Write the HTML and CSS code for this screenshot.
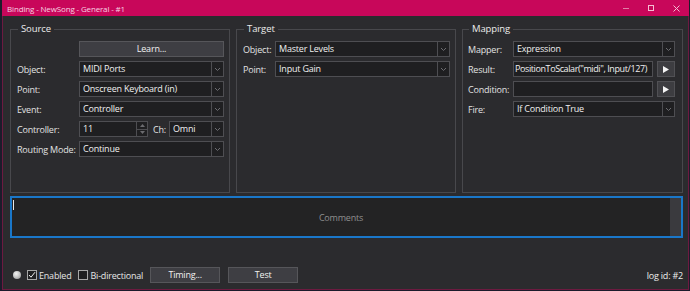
FILE: index.html
```html
<!DOCTYPE html>
<html lang="en">
<head>
    <meta charset="UTF-8">
    <meta name="viewport" content="width=device-width, initial-scale=1.0">
    <title>Binding - NewSong - General - #1</title>
    <link rel="stylesheet" href="styles.css">
</head>
<body>
    <div class="window">
        <div class="titlebar">
            <span class="title">Binding - NewSong - General - #1</span>
            <div class="caption">
                <svg class="cap-btn dim" width="6" height="6" viewBox="0 0 6 6"><path d="M0 3.5H6" stroke="currentColor" stroke-width="1"/></svg>
                <svg class="cap-btn" width="6" height="6" viewBox="0 0 6 6"><rect x="0.5" y="0.5" width="5" height="5" fill="none" stroke="currentColor" stroke-width="1"/></svg>
                <svg class="cap-btn" width="7" height="7" viewBox="0 0 7 7"><path d="M0.5 0.5L6.5 6.5M6.5 0.5L0.5 6.5" stroke="currentColor" stroke-width="1"/></svg>
            </div>
        </div>
        <div class="client">
            <div class="groups">
                <fieldset class="group source">
                    <legend>Source</legend>
                    <div class="form">
                        <span></span>
                        <div class="btn">Learn...</div>

                        <span class="lbl">Object:</span>
                        <div class="select"><span class="value">MIDI Ports</span><span class="arrow"><svg width="5" height="3" viewBox="0 0 5 3"><path d="M0 0L2.5 2.5L5 0" fill="none" stroke="currentColor"/></svg></span></div>

                        <span class="lbl">Point:</span>
                        <div class="select"><span class="value">Onscreen Keyboard (in)</span><span class="arrow"><svg width="5" height="3" viewBox="0 0 5 3"><path d="M0 0L2.5 2.5L5 0" fill="none" stroke="currentColor"/></svg></span></div>

                        <span class="lbl">Event:</span>
                        <div class="select"><span class="value">Controller</span><span class="arrow"><svg width="5" height="3" viewBox="0 0 5 3"><path d="M0 0L2.5 2.5L5 0" fill="none" stroke="currentColor"/></svg></span></div>

                        <span class="lbl">Controller:</span>
                        <div class="pair">
                            <div class="spin">
                                <span class="value">11</span>
                                <span class="spin-btns">
                                    <span class="spin-up"><svg width="5" height="3" viewBox="0 0 5 3"><path d="M0 3L2.5 0L5 3Z" fill="currentColor"/></svg></span>
                                    <span class="spin-down"><svg width="5" height="3" viewBox="0 0 5 3"><path d="M0 0L2.5 3L5 0Z" fill="currentColor"/></svg></span>
                                </span>
                            </div>
                            <span class="lbl ch">Ch:</span>
                            <div class="select grow"><span class="value">Omni</span><span class="arrow"><svg width="5" height="3" viewBox="0 0 5 3"><path d="M0 0L2.5 2.5L5 0" fill="none" stroke="currentColor"/></svg></span></div>
                        </div>

                        <span class="lbl">Routing Mode:</span>
                        <div class="select"><span class="value">Continue</span><span class="arrow"><svg width="5" height="3" viewBox="0 0 5 3"><path d="M0 0L2.5 2.5L5 0" fill="none" stroke="currentColor"/></svg></span></div>
                    </div>
                </fieldset>

                <fieldset class="group target">
                    <legend>Target</legend>
                    <div class="form">
                        <span class="lbl">Object:</span>
                        <div class="select"><span class="value">Master Levels</span><span class="arrow"><svg width="5" height="3" viewBox="0 0 5 3"><path d="M0 0L2.5 2.5L5 0" fill="none" stroke="currentColor"/></svg></span></div>

                        <span class="lbl">Point:</span>
                        <div class="select"><span class="value">Input Gain</span><span class="arrow"><svg width="5" height="3" viewBox="0 0 5 3"><path d="M0 0L2.5 2.5L5 0" fill="none" stroke="currentColor"/></svg></span></div>
                    </div>
                </fieldset>

                <fieldset class="group mapping">
                    <legend>Mapping</legend>
                    <div class="form">
                        <span class="lbl">Mapper:</span>
                        <div class="select"><span class="value">Expression</span><span class="arrow"><svg width="5" height="3" viewBox="0 0 5 3"><path d="M0 0L2.5 2.5L5 0" fill="none" stroke="currentColor"/></svg></span></div>

                        <span class="lbl">Result:</span>
                        <div class="pair">
                            <div class="input grow scrolled"><span>PositionToScalar("midi", Input/127)</span></div>
                            <div class="play"><svg width="6" height="7" viewBox="0 0 6 7"><path d="M0 0L6 3.5L0 7Z" fill="currentColor"/></svg></div>
                        </div>

                        <span class="lbl">Condition:</span>
                        <div class="pair">
                            <div class="input grow"></div>
                            <div class="play"><svg width="6" height="7" viewBox="0 0 6 7"><path d="M0 0L6 3.5L0 7Z" fill="currentColor"/></svg></div>
                        </div>

                        <span class="lbl">Fire:</span>
                        <div class="select"><span class="value">If Condition True</span><span class="arrow"><svg width="5" height="3" viewBox="0 0 5 3"><path d="M0 0L2.5 2.5L5 0" fill="none" stroke="currentColor"/></svg></span></div>
                    </div>
                </fieldset>
            </div>

            <div class="comments">
                <span class="caret"></span>
                <span class="placeholder">Comments</span>
                <span class="scrollbar"></span>
            </div>

            <div class="footer">
                <span class="led"></span>
                <span class="check on"><svg width="8" height="8" viewBox="0 0 8 8"><path d="M1 4L3 6.2L7 1.2" fill="none" stroke="currentColor" stroke-width="1"/></svg></span>
                <span class="check-lbl">Enabled</span>
                <span class="check"></span>
                <span class="check-lbl">Bi-directional</span>
                <div class="btn wide">Timing...</div>
                <div class="btn wide">Test</div>
                <span class="logid">log id: #2</span>
            </div>
        </div>
    </div>
</body>
</html>
```

FILE: styles.css
```css
body {
    margin: 0;
    width: 690px;
    height: 291px;
    overflow: hidden;
    background: #1c1b2b;
    font-family: "Open Sans", "Noto Sans", sans-serif;
    font-size: 9px;
    letter-spacing: -0.2px;
    color: #e6e6e6;
}
.window {
    margin-left: 2px;
    width: 685px;
    height: 289px;
    background: #2b2b2e;
    border: 1px solid #6d1a40;
    border-top: none;
    display: flex;
    flex-direction: column;
}
.titlebar {
    height: 16px;
    background: #c8075a;
    display: flex;
    align-items: center;
    margin-left: -1px;
    margin-right: -1px;
}
.title {
    padding-left: 5px;
    font-size: 8px;
    letter-spacing: -0.15px;
    color: #f6d2e0;
}
.caption {
    margin-left: auto;
    display: flex;
    align-items: center;
    gap: 19px;
    padding-right: 9px;
    color: #f3bcd2;
}
.cap-btn.dim {
    color: #e07fa6;
}
.client {
    flex: 1;
    display: flex;
    flex-direction: column;
    padding: 6px 5px 0 7px;
}
.groups {
    display: flex;
    gap: 6px;
    height: 171px;
}
.group {
    flex: 1;
    margin: 0;
    min-width: 0;
    border: 1px solid #48484c;
    padding: 5px 5px 0 6px;
}
.group legend {
    font-size: 9.5px;
    letter-spacing: -0.1px;
    line-height: 14px;
    padding: 0 3px;
    margin-left: 1px;
    color: #ececec;
}
.form {
    display: grid;
    row-gap: 4px;
    grid-auto-rows: 16px;
    align-items: center;
}
.source .form {
    grid-template-columns: 62px minmax(0, 1fr);
}
.target .form {
    grid-template-columns: 32px minmax(0, 1fr);
}
.mapping {
    padding-left: 5px;
    padding-right: 7px;
}
.mapping .form {
    grid-template-columns: 45px minmax(0, 1fr);
}
.lbl {
    white-space: nowrap;
    color: #e2e2e2;
}
.select, .input, .spin {
    height: 16px;
    box-sizing: border-box;
    display: flex;
    background: #1f1f21;
    border: 1px solid #4e4e52;
    overflow: hidden;
}
.value {
    flex: 1;
    padding-left: 3px;
    line-height: 14px;
    white-space: nowrap;
    overflow: hidden;
    color: #f0f0f0;
}
.arrow {
    width: 11px;
    border-left: 1px solid #4e4e52;
    display: flex;
    align-items: center;
    justify-content: center;
    color: #6c6c70;
}
.pair {
    display: flex;
    align-items: center;
    height: 16px;
    min-width: 0;
}
.grow {
    flex: 1;
    min-width: 0;
}
.spin {
    width: 69px;
}
.spin-btns {
    width: 10px;
    display: flex;
    flex-direction: column;
    border-left: 1px solid #4e4e52;
}
.spin-up, .spin-down {
    flex: 1;
    display: flex;
    align-items: center;
    justify-content: center;
    color: #6c6c70;
}
.spin-up {
    border-bottom: 1px solid #4e4e52;
}
.ch {
    margin: 0 3px 0 5px;
}
.input {
    line-height: 14px;
    white-space: nowrap;
    color: #f0f0f0;
}
.scrolled {
    padding-left: 1px;
    letter-spacing: -0.4px;
}
.play {
    width: 18px;
    height: 16px;
    flex: none;
    box-sizing: border-box;
    margin-left: 4px;
    background: #3d3d41;
    border: 1px solid #515155;
    display: flex;
    align-items: center;
    justify-content: center;
    color: #f4f4f4;
}
.btn {
    height: 16px;
    box-sizing: border-box;
    background: #3e3e43;
    border: 1px solid #56565a;
    text-align: center;
    line-height: 14px;
    color: #f2f2f2;
}
.comments {
    margin-top: 3px;
    height: 42px;
    box-sizing: border-box;
    border: 2px solid #1a77c9;
    background: #232324;
    display: flex;
    align-items: center;
    position: relative;
}
.caret {
    position: absolute;
    left: 1px;
    top: 2px;
    width: 1px;
    height: 10px;
    background: #e8e8e8;
}
.placeholder {
    flex: 1;
    text-align: center;
    color: #8f8f8f;
}
.scrollbar {
    align-self: stretch;
    width: 11px;
    background: #3a3a3e;
}
.footer {
    margin-top: 29px;
    display: flex;
    align-items: center;
    height: 16px;
    padding-left: 3px;
}
.led {
    width: 8px;
    height: 8px;
    border-radius: 50%;
    background: radial-gradient(circle at 40% 35%, #f4f4f4 0%, #c9c9c9 45%, #8a8a8a 100%);
    margin-right: 6px;
}
.check {
    width: 10px;
    height: 10px;
    box-sizing: border-box;
    border: 1px solid #a8a8a8;
    background: #1f1f21;
    display: flex;
    align-items: center;
    justify-content: center;
    color: #f0f0f0;
    margin-right: 2px;
}
.check-lbl {
    margin-right: 7px;
    color: #e6e6e6;
}
.btn.wide {
    width: 70px;
    margin-right: 8px;
}
.logid {
    margin-left: auto;
    color: #ececec;
}
```
